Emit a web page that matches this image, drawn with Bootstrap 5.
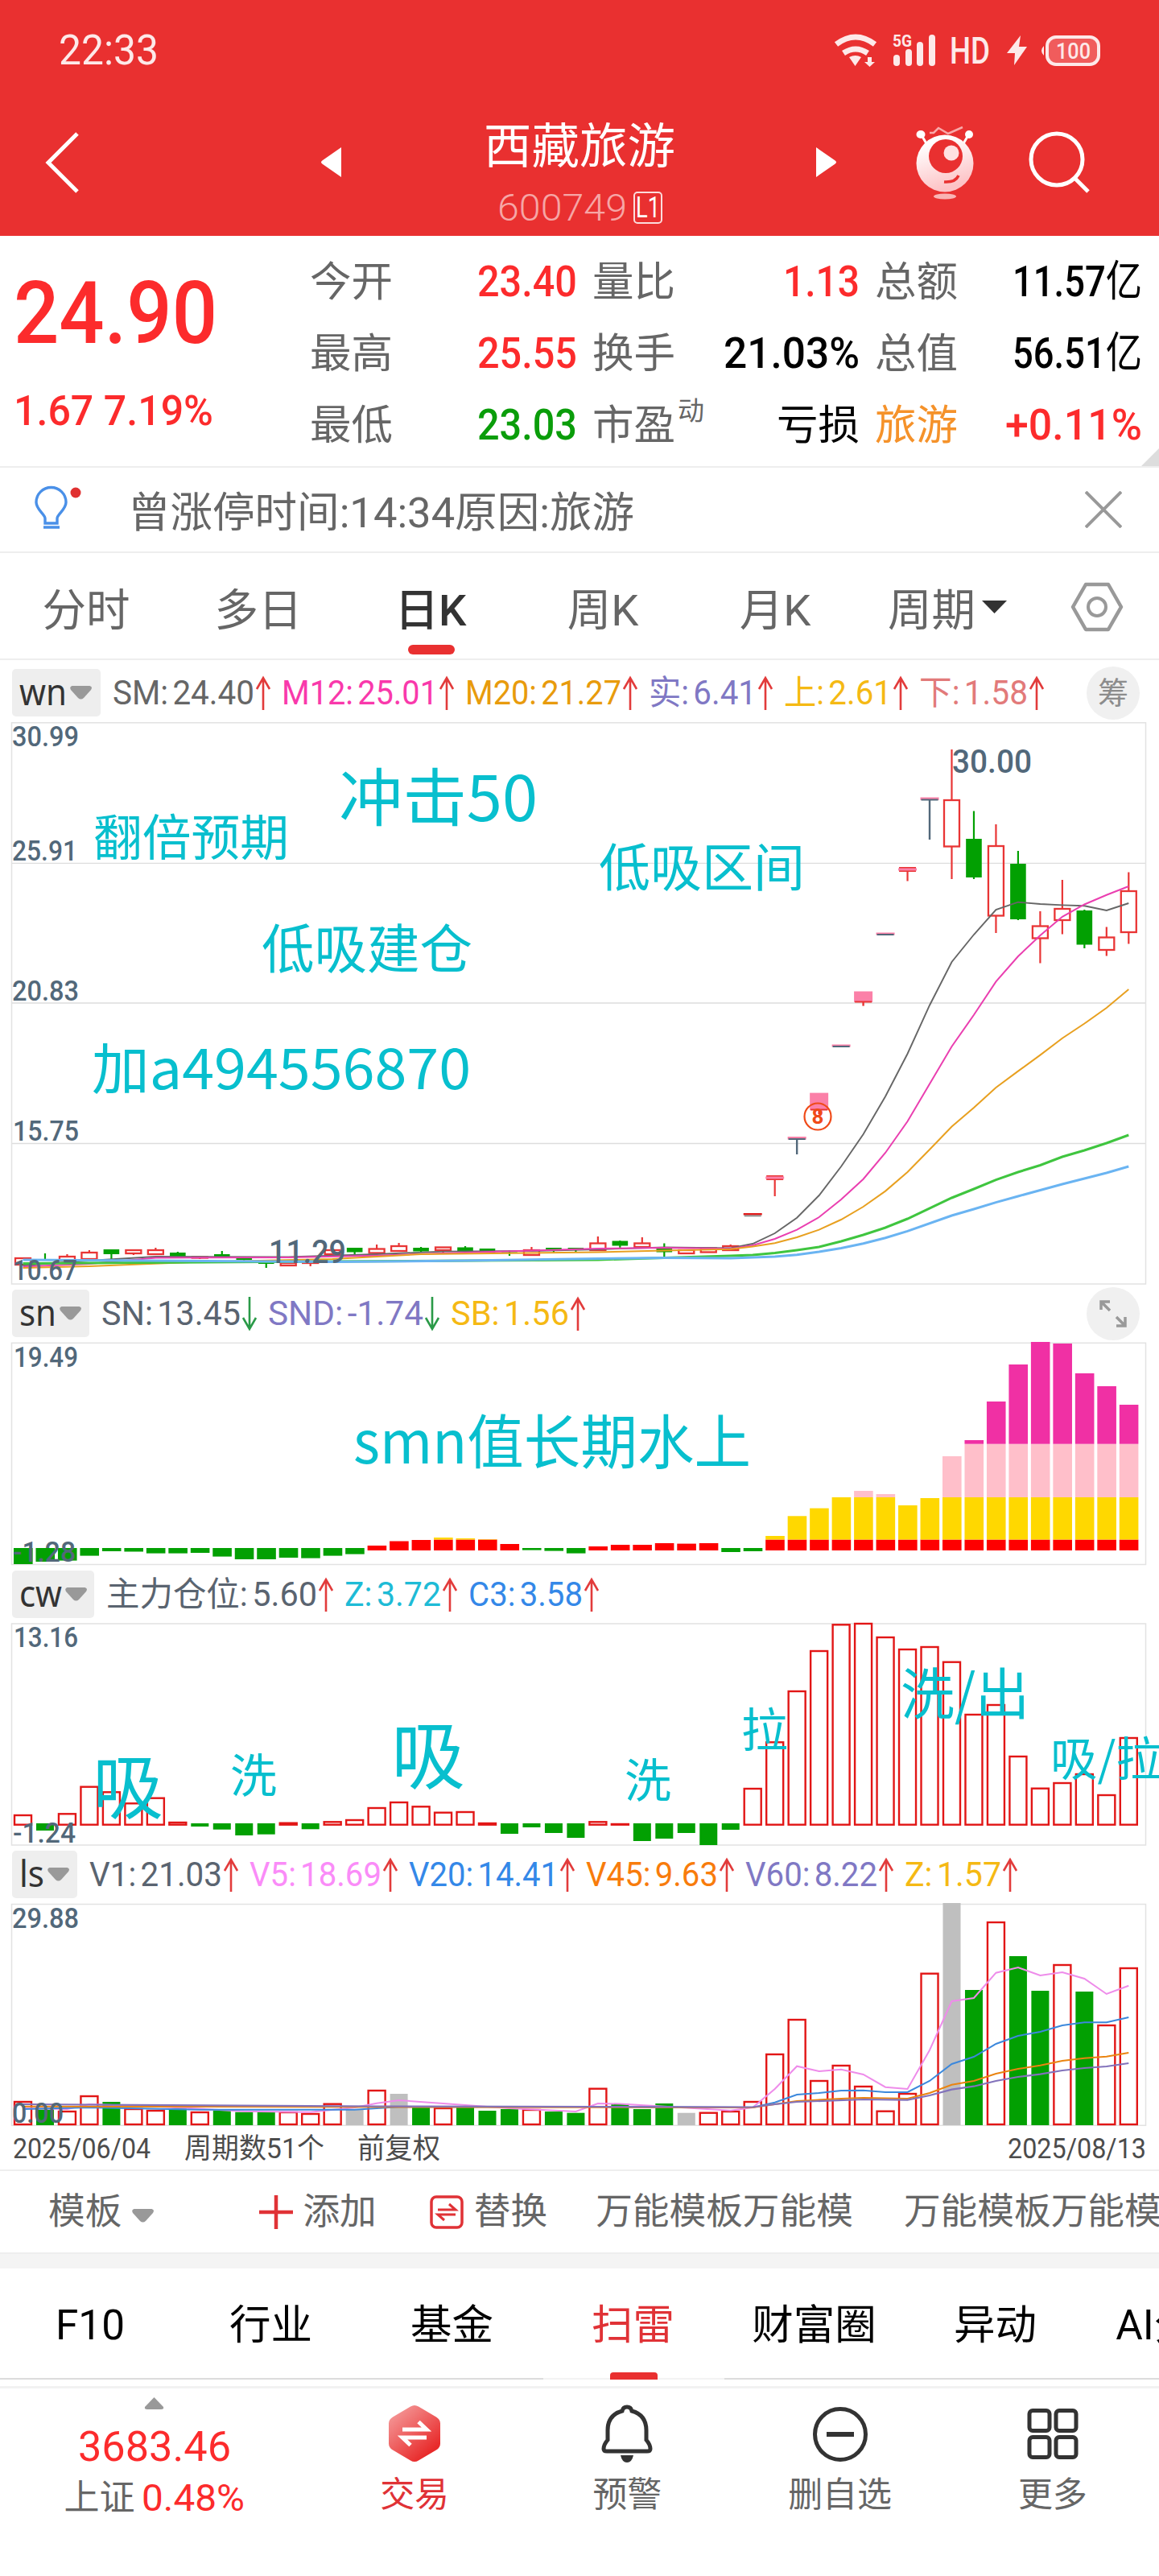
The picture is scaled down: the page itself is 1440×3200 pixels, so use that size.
<!DOCTYPE html>
<html lang="zh-CN">
<head>
<meta charset="utf-8">
<meta name="viewport" content="width=device-width, initial-scale=1">
<title>西藏旅游 600749</title>
<link href="https://cdn.jsdelivr.net/npm/bootstrap@5.3.0/dist/css/bootstrap.min.css" rel="stylesheet">
<style>
  body{width:1440px;height:3200px;overflow:hidden;background:#fff;color:#666;font-family:Roboto,"Noto Sans CJK SC",sans-serif;line-height:1}
  svg{display:block;flex:none}
  b{font-weight:500}
  .fit{display:inline-block;white-space:nowrap;text-align:left;flex:none}
  .fit>span{display:inline-block;transform-origin:0 50%}
  .up{color:#fc2b2c}.down{color:#0a9d0a}.ink{color:#000}.brand{color:#e03236}

  .topbar{background:#e93030;color:#fff;height:293px}
  .statusline{height:125px;padding:0 70px 0 73px;font-size:51px;color:#fde9e9}
  .titlebar{height:168px}
  .titles{width:320px}
  .stock{font-size:60px;line-height:60px;margin-top:28px}
  .code{font-size:46px;font-weight:300;color:#f6a6a6;line-height:46px}
  .lv{width:36px;height:40px;border:2px solid #fbdcdc;border-radius:5px;font-size:36px;color:#fff}

  .quote{height:288px;border-bottom:2px solid #eee;padding:13px 0 0 17px}
  .price{font-size:108px;height:156px;padding-top:29px}
  .chg{font-size:52px;padding-top:23px}
  .qleft{width:368px}
  .qline{height:89px;font-size:53px}
  .qcell{width:332px;margin-right:19px}
  .qcell .name{font-size:51.5px}
  .tiny{font-size:33px;margin:-36px auto 0 3px}
  .corner{right:0;bottom:0}

  .notice{height:106px;border-bottom:2px solid #eee;padding:0 46px 0 42px;font-size:52px}
  .notice .fit{padding-top:9px;margin-left:-3px}
  .periods{height:133px;border-bottom:2px solid #eee;font-size:54.5px}
  .periods .cell{width:214px;height:100%;padding-top:11px}
  .periods .on{color:#333}
  .bar1{width:58px;height:12px;border-radius:6px;background:#e93030;bottom:5px;left:79px}

  .ind{padding-left:15px;font-size:42px}
  .ind b{font-weight:450;margin-left:.13em}
  .pill{height:59px;background:#eee;border-radius:5px;font-size:46px;color:#333;padding-left:9px;margin-right:15px;font-family:"Noto Sans",sans-serif}
  .pill .fit{margin-top:-6px}
  .ind .it{margin-right:12px}
  .ind .rd{width:66px;height:66px;border-radius:50%;background:#f0f0f0;color:#8c8c8c;font-size:38px;margin-left:auto;margin-right:24px}
  .c-gy{color:#666}.c-sl{color:#5a6470}.c-mg{color:#f939ab}.c-or{color:#e89b0c}.c-pu{color:#8078c4}.c-ye{color:#f5b914}.c-rd{color:#e27a7a}
  .c-cy{color:#1ebbd6}.c-bl{color:#3488e8}.c-vi{color:#fa8cf8}.c-og{color:#f87c0c}
  .axis{font-family:Roboto,sans-serif;font-weight:500;fill:#52687a}
  .note{font-family:"Noto Sans CJK SC",sans-serif;fill:#08bfce}

  .dates{height:55px;padding:1px 16px 0 16px;font-size:35px;color:#4c4c4c;border-bottom:2px solid #eee}
  .tpl{height:103px;font-size:45.7px;border-bottom:2px solid #eee}
  .band{height:18px;background:#f4f4f4}
  .infotabs{height:138px;font-size:51.5px;color:#000;overflow:hidden}
  .infotabs .cell{width:225px;flex:none;border-bottom:2px solid #dcdcdc;padding:6px 2px 0 0}
  .infotabs .on{border-color:#f3f3f3}
  .bar2{width:59px;height:9px;border-radius:4px 4px 0 0;background:#e93030;bottom:-2px;left:83px}
  .dock{margin-top:8px;border-top:3px solid #f2f2f2;height:232px;font-size:43px}
  .dock .cell{width:264.25px}
  .dock .idx{width:383px}
  .dock .lab{margin-top:19px}
</style>
<script src="https://cdn.jsdelivr.net/npm/bootstrap@5.3.0/dist/js/bootstrap.bundle.min.js"></script>
</head>
<body>
<svg width="0" height="0" class="position-absolute">
  <defs>
    <symbol id="up" viewBox="0 0 22 44"><path d="M11 43V3M3 17L11 3l8 14" fill="none" stroke="#e23b3b" stroke-width="2.6"/></symbol>
    <symbol id="dn" viewBox="0 0 22 44"><path d="M11 1v40M3 27l8 14 8-14" fill="none" stroke="#2a9a48" stroke-width="2.6"/></symbol>
    <symbol id="tri" viewBox="0 0 27 17"><path d="M2.500 0h22q4 1 1.500 5l-9 10q-3.500 3-7 0l-9-10Q-1 1 2.500 0z" fill="#999"/></symbol>
  </defs>
</svg>

<header class="topbar">
  <div class="statusline d-flex align-items-center">
    <span class="fit me-auto" data-w="124">22:33</span>
    <svg width="340" height="48" viewBox="1030 38 340 48" fill="#fde9e9">
      <g fill="none" stroke="#fde9e9" stroke-width="7"><path d="M1039 54q24-18 48 0"/><path d="M1048 65q15-10 30 0"/></g>
      <path d="M1055 70q8-4 15 0l-7.500 11zM1078 70h5v6h4l-6.500 6-6.500-6h4z"/>
      <text x="1109" y="57" font-size="20" font-weight="700" textLength="24" lengthAdjust="spacingAndGlyphs">5G</text>
      <rect x="1110" y="67" width="8" height="14" rx="4"/><rect x="1125" y="60" width="8" height="21" rx="4"/><rect x="1139" y="51" width="8" height="30" rx="4"/><rect x="1154" y="42" width="8" height="39" rx="4"/>
      <text x="1180" y="78" font-size="47" font-weight="500" textLength="50" lengthAdjust="spacingAndGlyphs">HD</text>
      <path d="M1268 43l-17 22h10l-1 15 16-23h-10z"/>
      <rect x="1301" y="45" width="64" height="34" rx="11" fill="#f05c5c" stroke="#fde9e9" stroke-width="4"/><path d="M1297 56q-6 6 0 12z"/>
      <text x="1312" y="72" font-size="27" font-weight="500" textLength="43" lengthAdjust="spacingAndGlyphs">100</text>
    </svg>
  </div>
  <div class="titlebar d-flex">
    <svg width="560" height="168" viewBox="0 125 560 168"><path d="M96 166L60 202l36 36" fill="none" stroke="#fff" stroke-width="5"/><path d="M424 183v37l-23-16q-4-2.500 0-5z" fill="#fff"/></svg>
    <div class="titles d-flex flex-column align-items-center">
      <div class="stock fit" data-w="238">西藏旅游</div>
      <div class="d-flex align-items-center" style="margin-top:22px">
        <span class="code fit" data-w="161">600749</span>
        <span class="lv d-flex align-items-center justify-content-center ms-2"><span class="fit" data-w="30">L1</span></span>
      </div>
    </div>
    <svg width="560" height="168" viewBox="880 125 560 168">
      <defs><linearGradient id="bot" x1="0" y1="0" x2=".3" y2="1"><stop offset=".2" stop-color="#fff"/><stop offset="1" stop-color="#fdc3c6"/></linearGradient></defs>
      <path d="M1014 183v37l23-16q4-2.500 0-5z" fill="#fff"/>
      <path d="M1155 165h5l6-6 12 7 18-8" fill="none" stroke="#f9a9a9" stroke-width="2.500"/>
      <path d="M1145 168l7 12M1203 168l-7 12" stroke="#fff" stroke-width="3"/><ellipse cx="1144" cy="167" rx="5.500" ry="5" fill="#fff"/><ellipse cx="1204" cy="167" rx="5" ry="5" fill="#fff"/>
      <circle cx="1174" cy="203" r="35.500" fill="url(#bot)"/><circle cx="1175" cy="194" r="21" fill="#e93030"/><circle cx="1182" cy="190" r="9.500" fill="#ffe1e1"/>
      <path d="M1173 226q14 1 18-8" fill="none" stroke="#e93030" stroke-width="3.500"/><ellipse cx="1174" cy="244" rx="14" ry="3.500" fill="#f9b4b4"/>
      <circle cx="1313" cy="198" r="32" fill="none" stroke="#fff" stroke-width="5"/><path d="M1336 222l16 16" stroke="#fff" stroke-width="5"/>
    </svg>
  </div>
</header>

<section class="quote d-flex position-relative">
  <div class="qleft">
    <div class="price up"><b class="fit" data-w="253">24.90</b></div>
    <div class="chg up d-flex align-items-center"><b class="fit" data-w="248">1.67 7.19%</b></div>
  </div>
  <div>
    <div class="qline d-flex">
      <div class="qcell d-flex align-items-center justify-content-between"><span class="name">今开</span><b class="fit up" data-w="124">23.40</b></div>
      <div class="qcell d-flex align-items-center justify-content-between"><span class="name">量比</span><b class="fit up" data-w="95">1.13</b></div>
      <div class="qcell d-flex align-items-center justify-content-between"><span class="name">总额</span><b class="fit ink" data-w="161">11.57<span class="fw-normal">亿</span></b></div>
    </div>
    <div class="qline d-flex">
      <div class="qcell d-flex align-items-center justify-content-between"><span class="name">最高</span><b class="fit up" data-w="124">25.55</b></div>
      <div class="qcell d-flex align-items-center justify-content-between"><span class="name">换手</span><b class="fit ink" data-w="169">21.03%</b></div>
      <div class="qcell d-flex align-items-center justify-content-between"><span class="name">总值</span><b class="fit ink" data-w="161">56.51<span class="fw-normal">亿</span></b></div>
    </div>
    <div class="qline d-flex">
      <div class="qcell d-flex align-items-center justify-content-between"><span class="name">最低</span><b class="fit down" data-w="124">23.03</b></div>
      <div class="qcell d-flex align-items-center"><span class="name">市盈</span><span class="tiny">动</span><span class="name ink">亏损</span></div>
      <div class="qcell d-flex align-items-center justify-content-between"><span class="name" style="color:#f5922a">旅游</span><b class="fit up" data-w="170">+0.11%</b></div>
    </div>
  </div>
  <svg class="corner position-absolute" width="22" height="22"><path d="M22 0v22H0z" fill="#ddd"/></svg>
</section>

<section class="notice d-flex align-items-center">
  <svg width="120" height="60" viewBox="42 604 120 60"><path d="M56 651v-6c0-5-11-11-11-20a18.500 18.500 0 0 1 37 0c0 9-11 15-11 20v6zM54 656h20" fill="none" stroke="#4a90e8" stroke-width="3.400"/><circle cx="94" cy="613" r="6.500" fill="#e03030"/></svg>
  <span class="fit me-auto" data-w="629">曾涨停时间:14:34原因:旅游</span>
  <svg width="46" height="46" viewBox="0 0 46 46"><path d="M1 1l44 44M45 1L1 45" stroke="#999" stroke-width="4"/></svg>
</section>

<nav class="periods d-flex">
  <div class="cell d-flex align-items-center justify-content-center">分时</div>
  <div class="cell d-flex align-items-center justify-content-center">多日</div>
  <div class="cell on d-flex align-items-center justify-content-center position-relative"><b>日K</b><i class="bar1 position-absolute"></i></div>
  <div class="cell d-flex align-items-center justify-content-center">周K</div>
  <div class="cell d-flex align-items-center justify-content-center">月K</div>
  <div class="d-flex align-items-center" style="padding:11px 0 0 33px">周期<svg width="31" height="16" class="ms-2 mb-2"><path d="M0 0h31L15.500 16z" fill="#333"/></svg></div>
  <svg width="66" height="62" viewBox="0 0 66 62" class="ms-auto" style="margin:36px 44px 0 0"><path d="M19 3h28l16 28-16 28H19L3 31z" fill="none" stroke="#999" stroke-width="4.500" stroke-linejoin="round"/><circle cx="33" cy="31" r="11" fill="none" stroke="#999" stroke-width="4"/></svg>
</nav>

<div class="ind d-flex align-items-center" style="height:77px;padding-top:4px">
  <div class="pill d-flex align-items-center"><span class="fit" data-w="59">wn</span><svg width="27" height="17" class="ms-1" style="margin-right:11px"><use href="#tri"/></svg></div>
  <div class="it d-flex align-items-center c-gy"><span class="fit" data-w="176">SM:<b>24.40</b></span><svg width="22" height="44"><use href="#up"/></svg></div>
  <div class="it d-flex align-items-center c-mg"><span class="fit" data-w="194">M12:<b>25.01</b></span><svg width="22" height="44"><use href="#up"/></svg></div>
  <div class="it d-flex align-items-center c-or"><span class="fit" data-w="194">M20:<b>21.27</b></span><svg width="22" height="44"><use href="#up"/></svg></div>
  <div class="it d-flex align-items-center c-pu"><span class="fit" data-w="134">实:<b>6.41</b></span><svg width="22" height="44"><use href="#up"/></svg></div>
  <div class="it d-flex align-items-center c-ye"><span class="fit" data-w="134">上:<b>2.61</b></span><svg width="22" height="44"><use href="#up"/></svg></div>
  <div class="it d-flex align-items-center c-rd"><span class="fit" data-w="135">下:<b>1.58</b></span><svg width="22" height="44"><use href="#up"/></svg></div>
  <div class="rd d-flex align-items-center justify-content-center">筹</div>
</div>
<svg id="k" width="1440" height="699" viewBox="0 897 1440 699"></svg>

<div class="ind d-flex align-items-center" style="height:71px">
  <div class="pill d-flex align-items-center"><span class="fit" data-w="46">sn</span><svg width="27" height="17" class="ms-1" style="margin-right:10px"><use href="#tri"/></svg></div>
  <div class="it d-flex align-items-center c-sl"><span class="fit" data-w="173">SN:<b>13.45</b></span><svg width="22" height="44"><use href="#dn"/></svg></div>
  <div class="it d-flex align-items-center c-pu"><span class="fit" data-w="193">SND:<b>-1.74</b></span><svg width="22" height="44"><use href="#dn"/></svg></div>
  <div class="it d-flex align-items-center c-ye"><span class="fit" data-w="147">SB:<b>1.56</b></span><svg width="22" height="44"><use href="#up"/></svg></div>
  <div class="rd d-flex align-items-center justify-content-center"><svg width="36" height="36" viewBox="0 0 36 36" fill="none" stroke="#999" stroke-width="3.500"><path d="M3 13V3h11M3 3l11 11M33 22v11H22M33 33L22 22"/></svg></div>
</div>
<svg id="sn" width="1440" height="279" viewBox="0 1667 1440 279"></svg>

<div class="ind d-flex align-items-center" style="height:69px">
  <div class="pill d-flex align-items-center"><span class="fit" data-w="53">cw</span><svg width="27" height="17" class="ms-1" style="margin-right:9px"><use href="#tri"/></svg></div>
  <div class="it d-flex align-items-center c-sl"><span class="fit" data-w="262">主力仓位:<b>5.60</b></span><svg width="22" height="44"><use href="#up"/></svg></div>
  <div class="it d-flex align-items-center c-cy"><span class="fit" data-w="120">Z:<b>3.72</b></span><svg width="22" height="44"><use href="#up"/></svg></div>
  <div class="it d-flex align-items-center c-bl"><span class="fit" data-w="142">C3:<b>3.58</b></span><svg width="22" height="44"><use href="#up"/></svg></div>
</div>
<svg id="cw" width="1440" height="279" viewBox="0 2015 1440 279"></svg>

<div class="ind d-flex align-items-center" style="height:69px">
  <div class="pill d-flex align-items-center"><span class="fit" data-w="31">ls</span><svg width="27" height="17" class="ms-1" style="margin-right:10px"><use href="#tri"/></svg></div>
  <div class="it d-flex align-items-center c-sl"><span class="fit" data-w="165">V1:<b>21.03</b></span><svg width="22" height="44"><use href="#up"/></svg></div>
  <div class="it d-flex align-items-center c-vi"><span class="fit" data-w="164">V5:<b>18.69</b></span><svg width="22" height="44"><use href="#up"/></svg></div>
  <div class="it d-flex align-items-center c-bl"><span class="fit" data-w="186">V20:<b>14.41</b></span><svg width="22" height="44"><use href="#up"/></svg></div>
  <div class="it d-flex align-items-center c-og"><span class="fit" data-w="164">V45:<b>9.63</b></span><svg width="22" height="44"><use href="#up"/></svg></div>
  <div class="it d-flex align-items-center c-pu"><span class="fit" data-w="164">V60:<b>8.22</b></span><svg width="22" height="44"><use href="#up"/></svg></div>
  <div class="it d-flex align-items-center c-ye"><span class="fit" data-w="120">Z:<b>1.57</b></span><svg width="22" height="44"><use href="#up"/></svg></div>
</div>
<svg id="ls" width="1440" height="279" viewBox="0 2363 1440 279"></svg>

<div class="dates d-flex align-items-center">
  <span class="fit" data-w="171">2025/06/04</span>
  <span class="fit" data-w="174" style="margin-left:42px">周期数51个</span>
  <span class="fit" data-w="103" style="margin-left:41px">前复权</span>
  <span class="fit ms-auto" data-w="172">2025/08/13</span>
</div>

<div class="tpl d-flex align-items-center text-nowrap overflow-hidden">
  <span style="margin-left:60px">模板</span>
  <svg width="27" height="17" style="margin:9px 64px 0 13px"><use href="#tri"/></svg>
  <i style="width:2px;height:53px;background:#f2f2f2"></i>
  <svg width="42" height="42" style="margin:0 12px 0 67px"><path d="M21 0v42M0 21h42" stroke="#e03236" stroke-width="4.500"/></svg>
  <span>添加</span>
  <svg width="42" height="42" viewBox="0 0 42 42" style="margin:0 13px 0 66px" fill="none" stroke="#e03236" stroke-width="3.500"><rect x="2" y="2" width="38" height="38" rx="6"/><path d="M10 18h22l-8-7M32 24H10l8 7" stroke-width="3"/></svg>
  <span>替换</span>
  <span style="margin-left:60px">万能模板万能模</span>
  <span style="margin-left:63px">万能模板万能模</span>
</div>
<div class="band"></div>

<nav class="infotabs d-flex text-nowrap">
  <div class="cell d-flex align-items-center justify-content-center"><span class="fit" data-w="86">F10</span></div>
  <div class="cell d-flex align-items-center justify-content-center">行业</div>
  <div class="cell d-flex align-items-center justify-content-center">基金</div>
  <div class="cell on brand d-flex align-items-center justify-content-center position-relative">扫雷<i class="bar2 position-absolute"></i></div>
  <div class="cell d-flex align-items-center justify-content-center">财富圈</div>
  <div class="cell d-flex align-items-center justify-content-center">异动</div>
  <div class="cell d-flex align-items-center justify-content-center">AI分析</div>
</nav>

<nav class="dock d-flex text-center">
  <div class="idx d-flex flex-column align-items-center">
    <svg width="25" height="15" style="margin-top:11px"><path d="M12.500 0L24 12q1 3-3 3H4q-4 0-3-3z" fill="#999"/></svg>
    <span class="up fit" data-w="190" style="font-size:52px;margin-top:21px">3683.46</span>
    <div class="d-flex align-items-center" style="margin-top:14px;font-size:44px"><span>上证</span><span class="up fit" data-w="128" style="margin-left:8px;font-size:46px">0.48%</span></div>
  </div>
  <div class="cell d-flex flex-column align-items-center">
    <svg width="64" height="72" viewBox="0 0 64 72" style="margin-top:20px"><defs><linearGradient id="hx" x1="0" y1="0" x2=".8" y2="1"><stop offset="0" stop-color="#f6a6a6"/><stop offset=".9" stop-color="#e82a2a"/></linearGradient></defs><path d="M27 2.500q5-3 10 0l22 13q5 3 5 8v25q0 5-5 8l-22 13q-5 3-10 0l-22-13q-5-3-5-8v-25q0-5 5-8z" fill="url(#hx)"/><path d="M17 31h30L37 21.500M47 41H17l10 9.500" fill="none" stroke="#fff" stroke-width="5"/></svg>
    <span class="lab brand">交易</span>
  </div>
  <div class="cell d-flex flex-column align-items-center">
    <svg width="64" height="72" viewBox="0 0 64 72" style="margin-top:20px" fill="none" stroke="#333" stroke-width="5"><path d="M32 3q5 0 6 5 18 5 18 24v12q5 6 5 11 0 3-4 3H7q-4 0-4-3 0-5 5-11V32Q8 13 26 8q1-5 6-5z"/><path d="M24 63h16q-2 9-8 9t-8-9z" fill="#333" stroke="none"/></svg>
    <span class="lab">预警</span>
  </div>
  <div class="cell d-flex flex-column align-items-center">
    <svg width="70" height="72" viewBox="0 0 70 72" style="margin-top:20px" fill="none" stroke="#333" stroke-width="5"><circle cx="35" cy="37" r="31.500"/><path d="M18 37h34" stroke-width="6"/></svg>
    <span class="lab">删自选</span>
  </div>
  <div class="cell d-flex flex-column align-items-center">
    <svg width="64" height="72" viewBox="0 0 64 72" style="margin-top:20px" fill="none" stroke="#333" stroke-width="5"><rect x="3" y="7.500" width="25" height="25" rx="4"/><rect x="36" y="7.500" width="25" height="25" rx="4"/><rect x="3" y="40.500" width="25" height="25" rx="4"/><rect x="36" y="40.500" width="25" height="25" rx="4"/></svg>
    <span class="lab">更多</span>
  </div>
</nav>

<script>
document.querySelectorAll('.fit').forEach(function(el){
  var s=document.createElement('span');
  while(el.firstChild) s.appendChild(el.firstChild);
  el.appendChild(s);
  var w=+el.dataset.w;
  s.style.transform='scaleX('+(w/s.getBoundingClientRect().width)+')';
  el.style.width=w+'px';
  s.style.marginRight='-400px';
});

var X=function(i){return 28.5+27.476*i};
var R='#e93535',G='#02a002';
function rect(x,y,w,h,f,s,sw){return '<rect x="'+x+'" y="'+y+'" width="'+w+'" height="'+Math.max(h,0.5)+'" fill="'+f+'"'+(s?' stroke="'+s+'" stroke-width="'+(sw||2.3)+'"':'')+'/>'}
function ln(x1,y1,x2,y2,c,w){return '<path d="M'+x1+' '+y1+'L'+x2+' '+y2+'" stroke="'+c+'" stroke-width="'+(w||2.2)+'" fill="none"/>'}
function poly(pts,c,w){return '<polyline points="'+pts.trim().split(/\s+/).map(function(p){var a=p.split(',');return X(+a[0])+','+a[1]}).join(' ')+'" fill="none" stroke="'+c+'" stroke-width="'+w+'"/>'}
function ax(x,y,t,w,s){return '<text class="axis" x="'+x+'" y="'+y+'" font-size="'+(s||35)+'" textLength="'+w+'" lengthAdjust="spacingAndGlyphs">'+t+'</text>'}
function note(x,y,s,t,w){return '<text class="note" x="'+x+'" y="'+y+'" font-size="'+s+'"'+(w?' textLength="'+w+'" lengthAdjust="spacingAndGlyphs"':'')+'>'+t+'</text>'}
function frame(t,b){return rect(14.5,t,1409,b-t,'none','#e2e2e2',1.5)}

/* candles: colour, high, body top, body bottom, low */
var K=[['r',1563,1563,1571,1571],['g',1557,1564,1566,1566],['r',1558,1561,1566,1566],['r',1553,1556,1564,1564],['g',1552,1552,1558,1564],['r',1553,1553,1557,1559],['r',1550,1553,1558,1558],['g',1555,1556,1563,1563],['r',1561,1561.5,1562.5,1564],['g',1554,1558,1561,1563],['g',1563,1563,1565,1569],['g',1567,1567,1570,1575],['r',1566,1569,1572,1572],['r',1566,1567,1569,1573],['r',1552,1553,1558,1558],['g',1550,1550,1555.5,1558],['r',1546,1551.5,1556.5,1557],['r',1544,1548,1554,1554],['g',1549,1550,1554.5,1556],['r',1549,1549.5,1553,1556],['g',1548,1549.5,1554,1556],['g',1551,1551,1556,1556],['g',1553,1554,1555.5,1560],['r',1549,1553,1559,1560],['g',1550,1550,1553,1556],['g',1550,1550,1553,1556],['r',1536,1544.5,1553,1553],['g',1541,1541.5,1547.5,1550],['r',1537,1544.5,1549,1549],['g',1544.5,1549.5,1555.5,1561],['r',1552,1553,1557,1557],['r',1550,1550.5,1555.5,1556],['r',1546,1548,1553,1554]];
var K2=[[42,'r',931,994,1051.500,1092],[43,'g',1007.500,1042,1090,1092],[44,'r',1024,1051,1137.500,1159],[45,'g',1057,1073,1142,1143],[46,'r',1132,1150.500,1165.500,1196.500],[47,'r',1093,1129,1143,1160.500],[48,'g',1130,1131,1173.500,1178],[49,'r',1151.500,1164.500,1180,1187.500],[50,'r',1083.500,1107,1158,1172.500]];
function candle(i,c,h,t,b,l){var x=X(i);
  return c=='r'?ln(x,h,x,t,R)+ln(x,b,x,l,R)+rect(x-9.5,t,19,b-t,'none',R):ln(x,h,x,l,G)+rect(x-9.8,t,19.6,b-t,G)}
function pinkT(i,t,b,l,c){var x=X(i),o=rect(x-11.5,t,23,b-t,'#fb80a8')+rect(x-10.5,b-1.5,21,2,c);if(l)o+=ln(x,b,x,l,c,2.4);return o}
var o=frame(897.8,1595)+ln(15,1072.3,1423,1072.3,'#ddd',1.3)+ln(15,1246,1423,1246,'#ddd',1.3)+ln(15,1420.5,1423,1420.5,'#ddd',1.3);
K.forEach(function(d,i){o+=candle.apply(null,[i].concat(d))});
K2.forEach(function(d){o+=candle.apply(null,d)});
o+=rect(X(33)-11.500,1507,23,2.5,'#e01818')+rect(X(33)-10.500,1509.5,21,1.8,'#888');
o+=rect(X(34)-10.500,1460,21,6,R)+rect(X(34)-11.500,1461.500,23,3,'#fb80a8')+ln(X(34),1466,X(34),1486,R);
o+=pinkT(35,1412,1415.500,1434,'#52687a')+pinkT(36,1357.600,1379,1384,R)+pinkT(37,1297.500,1300.500,0,'#52687a')+pinkT(38,1231.500,1245,1249.600,R)+pinkT(39,1158.500,1161.500,0,'#52687a');
o+=rect(X(40)-10.500,1077,21,6,R)+rect(X(40)-11.500,1078.500,23,3,'#fb80a8')+ln(X(40),1083,X(40),1094.500,R);
o+=pinkT(41,990.500,994,1043,'#52687a');
o+=poly('0,1572 3,1566 6,1561 12,1561.5 16,1558 19,1554.6 23,1554 26,1552 29,1549.5 32,1550.4 33,1545 34,1532 35,1512.7 36,1485 37,1449 38,1409 39,1362 40,1309 41,1248.7 42,1195 43,1161 44,1130 45,1120.7 46,1123 47,1124.4 48,1125.3 49,1131 50,1122','#666',1.9);
o+=poly('0,1573.6 3,1570 6,1562.5 12,1562 16,1559.7 20,1556 26,1551 29,1550 32,1551.3 33,1547 34,1539 35,1527.6 36,1512 37,1490 38,1464.7 39,1432 40,1393 41,1346.5 42,1300 43,1260.8 44,1219.4 45,1188 46,1162 47,1138.8 48,1123.5 49,1111.8 50,1101','#ea3fb0',2);
o+=poly('0,1575 3,1573 8,1567.6 14,1564 18,1558 26,1555.5 29,1553.6 32,1551.8 33,1548.5 34,1544.3 35,1537 36,1527.6 37,1515 38,1499 39,1479.6 40,1456 41,1428 42,1399.6 43,1376 44,1351 45,1330.6 46,1310.6 47,1289.7 48,1271.5 49,1252 50,1229','#e8a020',2);
o+=poly('0,1569.5 14,1567 26,1565 29,1562.5 32,1560 33,1559 34,1556.4 35,1553 36,1549 37,1542 38,1534 39,1525 40,1514 42,1488 43,1477 44,1465.7 45,1456 46,1447.5 47,1437 48,1429 49,1420 50,1410','#3fc53f',3);
o+=poly('0,1565 14,1567.6 20,1566 26,1563.4 29,1562.5 32,1563 33,1562 34,1561 35,1558.8 36,1555 37,1550.4 38,1544.8 39,1537.8 40,1529.4 42,1510 43,1502 44,1493.6 45,1486 47,1471 49,1457 50,1449','#6ab4f2',3);
o+='<circle cx="1016" cy="1387" r="16.500" fill="none" stroke="#f04a18" stroke-width="2.2"/><text x="1016" y="1396" font-size="26" font-weight="700" fill="#f04a18" text-anchor="middle" font-family="Roboto">8</text>';
o+=ax(15,927,'30.99',83)+ax(15,1068.500,'25.91',81)+ax(15,1242.700,'20.83',83)+ax(16,1417,'15.75',82)+ax(16,1590.400,'10.67',80)+ax(334,1569,'11.29',96,41)+ax(1183,960,'30.00',99,41);
o+=note(421,1020,78,'冲击50',247)+note(116,1063,61,'翻倍预期',243)+note(744,1101,64,'低吸区间',256)+note(325,1203,65.500,'低吸建仓',262)+note(114,1353,68,'加a494556870',471);
document.getElementById('k').innerHTML=o;

/* momentum columns: edge of each column, above or below the zero line */
var S=[1943,1940,1938.6,1932.6,1927,1927.5,1929.6,1929.6,1929,1933.6,1937,1937,1935,1935.6,1932.6,1930.6,-1920,-1914.5,-1913,-1910,-1911,-1912,-1918,1925.6,1926.6,1929.6,-1921,-1919,-1919,-1917,-1917.6,-1917,1928,1927,-1908,-1883.3,-1873.6,-1860,-1852,-1856,-1870,-1861,-1809,-1789,-1741,-1695,-1667,-1669,-1706,-1722,-1745];
o=frame(1668.3,1943.5);
S.forEach(function(v,i){var x=X(i)-11.5,w=23.6;
  if(v>0){o+=rect(x,1923,w,v-1923,G);return}
  v=-v;
  [[1926,1912.500,'#fe0000'],[1912.500,1860,'#ffd800'],[1860,1793.700,'#ffbfca'],[1793.700,1660,'#f030a4']].forEach(function(z){
    if(v<z[0]) o+=rect(x,Math.max(v,z[1]),w,z[0]-Math.max(v,z[1]),z[2])});
});
o+=ax(17,1697.600,'19.49',80)+ax(16,1939.600,'-1.28',78)+note(439,1818,73,'smn值长期水上',494);
document.getElementById('sn').innerHTML=o;

/* position columns: positive = outlined top, negative = filled bottom */
var C=[2254,-2274,2252.3,2218.7,2225.3,2239.3,2232.7,2263,-2269,-2272.7,-2280,-2278.7,2263.7,-2272.3,2262.3,2260,2245,2238,2243.3,2250.7,2250,2264,-2278,-2270,-2277,-2283,2262.3,2265,-2287,-2284,-2277,-2292,-2273,2221,2163.3,2100,2050,2017.3,2016,2033,2048,2045,2063.7,2129,2117,2181,2220.7,2214,2203,2229,2158];
o=frame(2017,2292);
C.forEach(function(v,i){var x=X(i);
  o+=v<0?rect(x-11,2265,22,-v-2265,G):rect(x-10.5,v+1,21,2266.7-v-1,'none','#e21616',2.4)});
o+=ax(17,2046,'13.16',80)+ax(16,2289,'-1.24',78);
o+=note(115,2252,88,'吸')+note(286,2227,58,'洗')+note(486,2215,92,'吸')+note(776,2233,58,'洗')+note(921,2170,58,'拉')+note(1119,2130,69,'洗/出',160)+note(1305,2206,58,'吸/拉',140);
document.getElementById('cw').innerHTML=o;

/* volume columns */
var V='r2610 g2620.7 r2622 r2603 g2611 r2619 r2621 g2619 r2623 g2621.7 g2623.7 g2623.7 r2623 r2625 r2612.7 s2620.7 r2596 s2601 g2617.7 r2618 g2617.7 g2622 g2620 r2620 g2623 g2624.7 r2593.7 g2613.7 g2620 g2613 s2624.7 r2623.7 r2622 r2610 r2551 r2508 r2584 r2565 r2591 r2621.7 r2600 r2450.7 s2364 g2472 r2387 g2430 g2473 r2440 g2474 r2515 r2444'.split(' ');
o=frame(2365.5,2640.3);
V.forEach(function(s,i){var x=X(i),c=s[0],v=+s.slice(1);
  o+=c=='r'?rect(x-10.5,v+1,21,2639-v-1,'none','#e21616',2.4):rect(x-11,v,22,2640-v,c=='g'?G:'#bfbfbf')});
o+=poly('0,2619 2,2620 3,2614 6,2616.7 10,2622.7 13,2623.7 15,2618 16,2612.7 17,2609 19,2613 22,2619 25,2623 26,2613 27,2613.5 29,2616.7 32,2621.7 33,2618 34,2595 35,2566.7 36,2573 37,2570.7 38,2577 39,2592.7 40,2595 41,2546.7 42,2486 43,2482 44,2450.7 45,2444 46,2454 47,2450 48,2458 49,2477 50,2466.7','#ee8cea',2);
o+=poly('0,2620 3,2618 8,2620.7 15,2620.7 17,2617.3 26,2617.3 33,2618 34,2611.7 35,2602 36,2600 37,2597 38,2596.7 39,2599 40,2599 41,2585 42,2564 43,2555 44,2539 45,2529 46,2524 47,2516 48,2512.3 49,2512.3 50,2506','#3c88dc',2);
o+=poly('0,2616.7 33,2618 34,2614 35,2610 37,2607 38,2606 40,2607 41,2600 42,2589.7 43,2585 44,2576 45,2570 46,2565.7 47,2560 48,2556.7 49,2554.7 50,2550','#ea8410',2);
o+=poly('0,2614 16,2616.5 26,2617 33,2617.5 34,2614 35,2611 38,2608 40,2608.7 41,2603 42,2595.7 43,2591.7 44,2585 45,2580 46,2576.7 47,2572 48,2569 49,2567 50,2563','#8272bb',2.2);
o+=ax(15,2395,'29.88',83)+ax(15,2636.600,'0.00',64);
document.getElementById('ls').innerHTML=o;
</script>
</body>
</html>
